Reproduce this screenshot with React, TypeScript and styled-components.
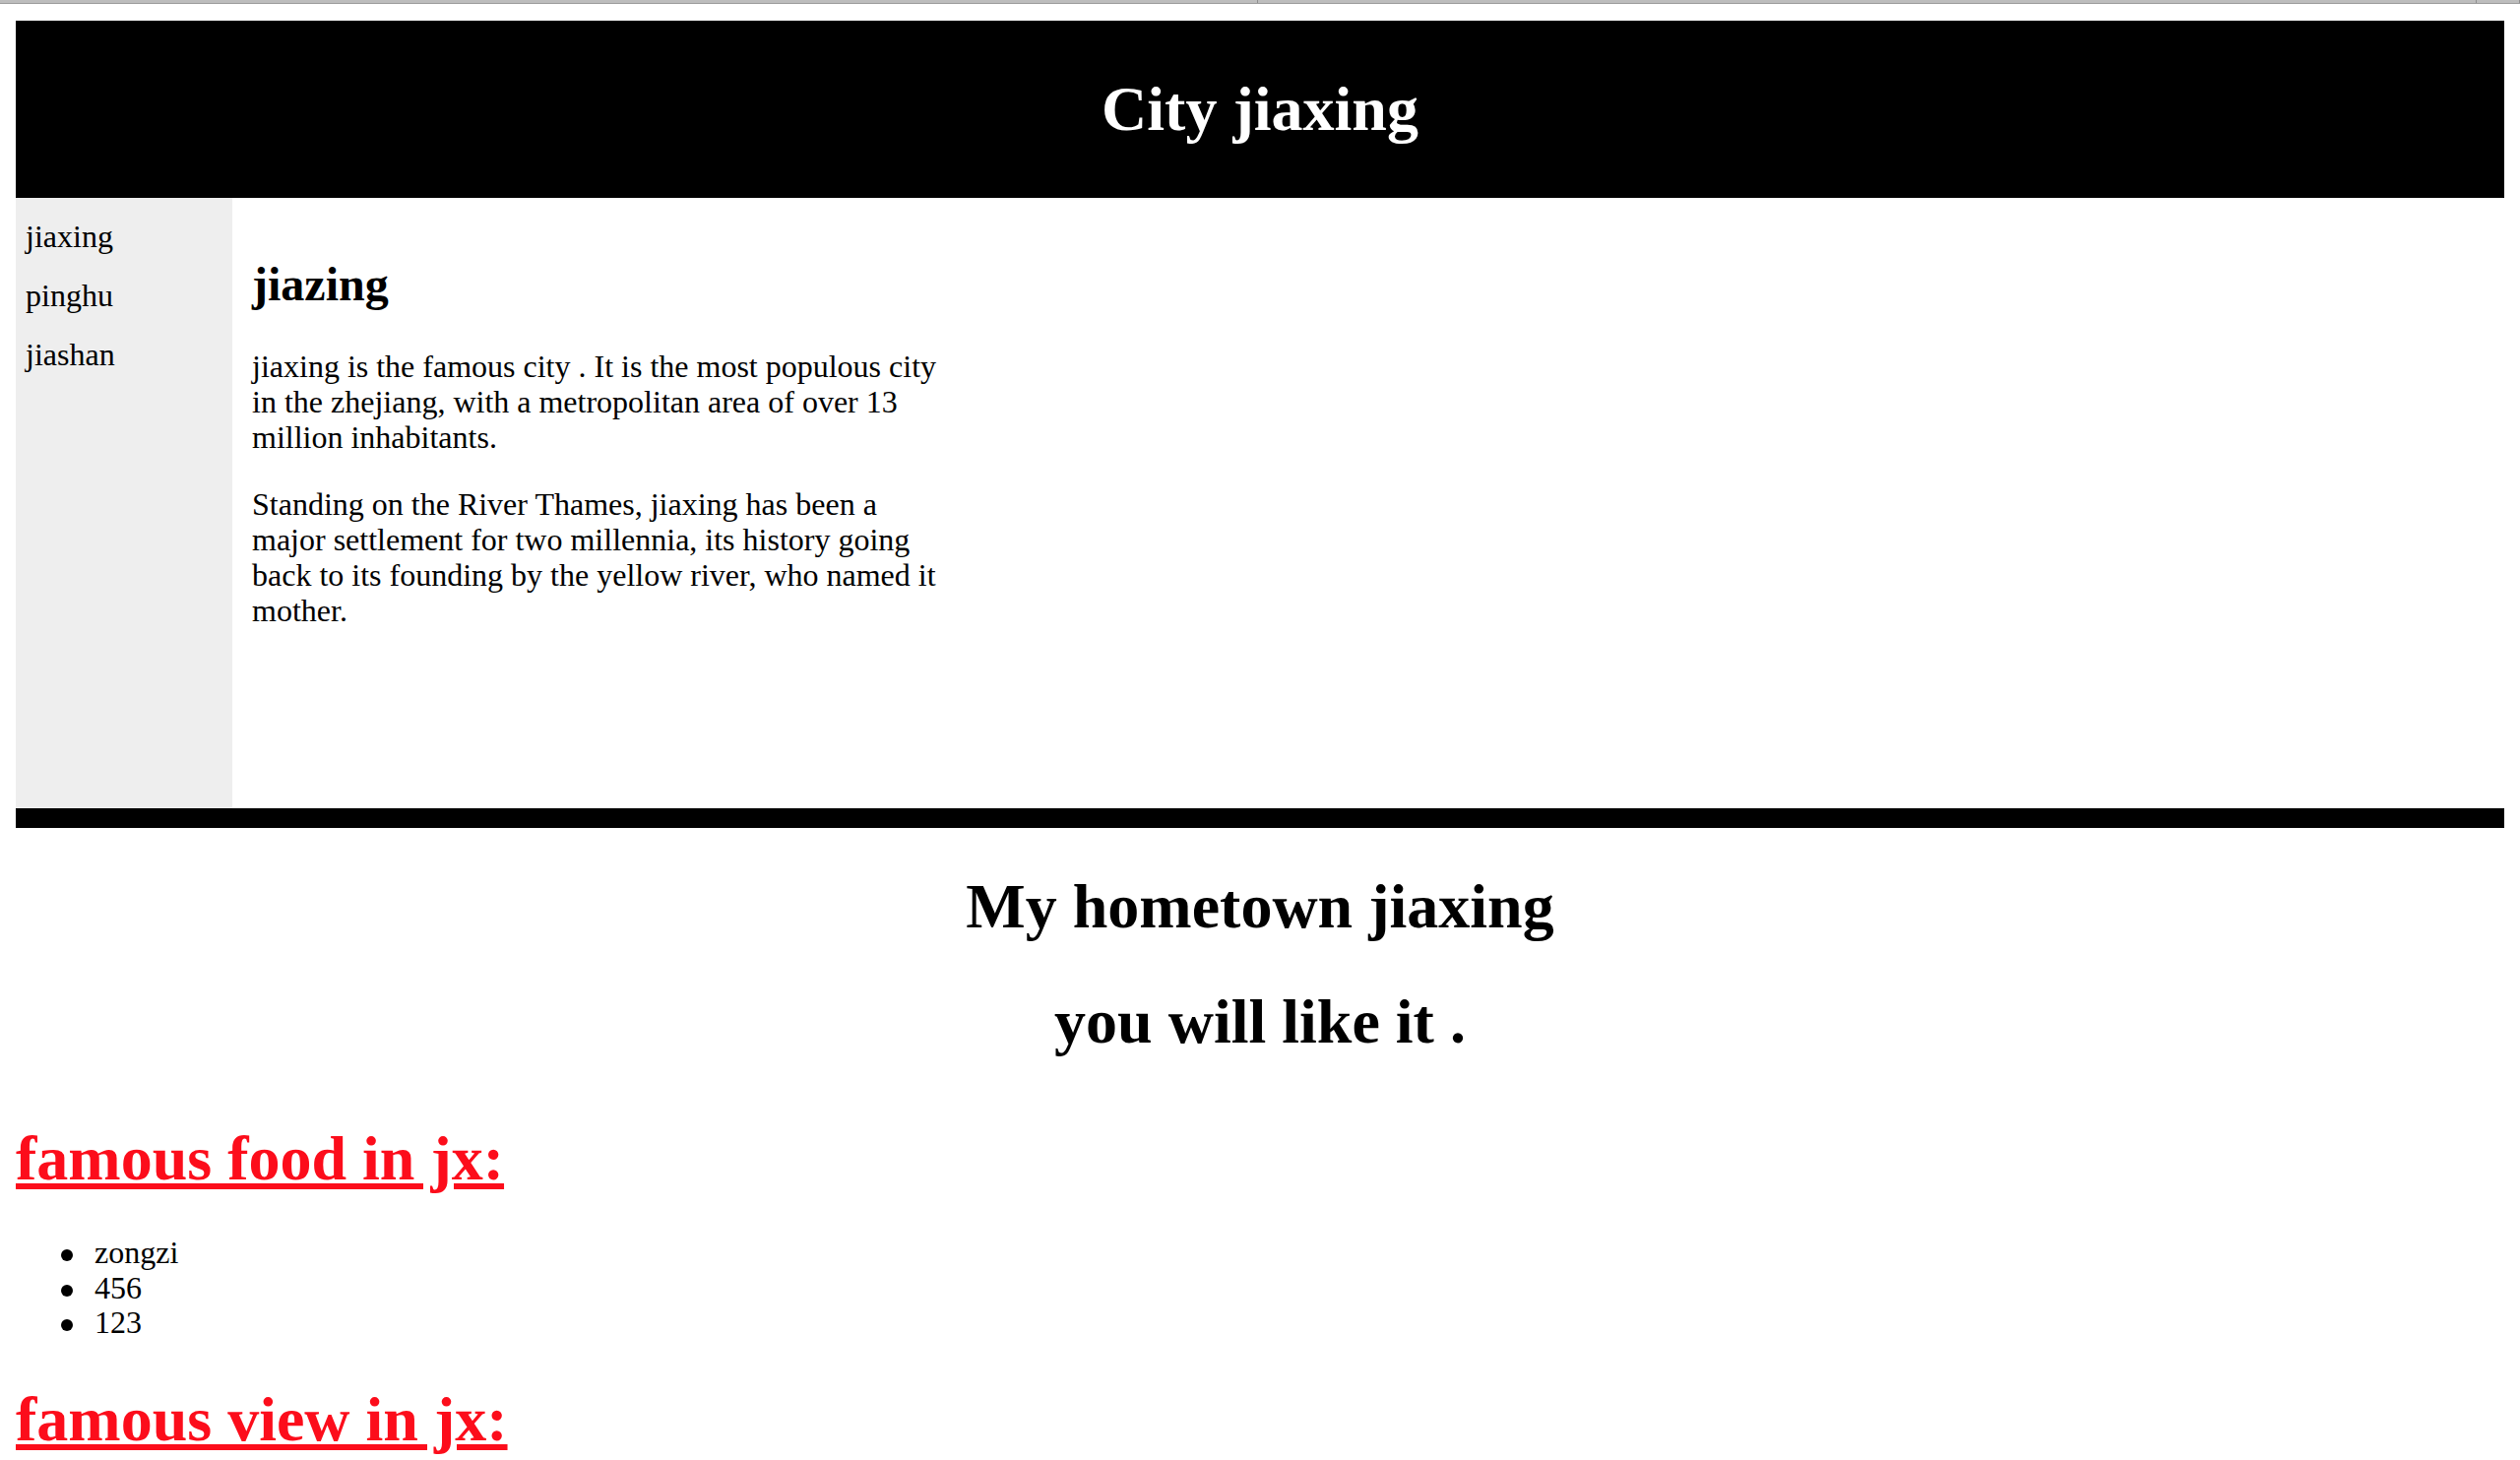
import React from "react";
import styled, { createGlobalStyle } from "styled-components";

const GlobalStyle = createGlobalStyle`
  html, body {
    margin: 0;
    padding: 0;
    background: #ffffff;
    overflow: hidden;
  }
  body {
    font-family: "Liberation Serif", "Times New Roman", Times, serif;
    font-size: 32px;
    color: #000000;
  }
`;

const BrowserStrip = styled.div`
  display: flex;
  height: 3px;
  background: #b6b6b6;
  border-bottom: 1px solid #9c9c9c;
`;

const StripTab = styled.div<{ $w?: number }>`
  flex: ${(p) => (p.$w ? `0 0 ${p.$w}px` : "1 1 auto")};
  border-right: 1px solid #8e8e8e;
  background: #bdbdbd;
`;

const Page = styled.div`
  padding: 17px 16px 0;
`;

const Header = styled.header`
  background: #000000;
  color: #ffffff;
  text-align: center;
  padding: 10px;
`;

const HeaderTitle = styled.h1`
  margin: 43px 0;
  font-size: 64px;
  font-weight: bold;
  line-height: normal;
`;

const Section = styled.section`
  display: flex;
  height: 620px;
`;

const Nav = styled.nav`
  box-sizing: border-box;
  flex: 0 0 220px;
  height: 100%;
  background: #eeeeee;
  padding: 21px 10px;
`;

const NavList = styled.ul`
  list-style: none;
  margin: 0;
  padding: 0;
`;

const NavItem = styled.li`
  line-height: 36px;
  margin-bottom: 24px;
`;

const Article = styled.article`
  width: 700px;
  padding: 20px;
`;

const ArticleTitle = styled.h2`
  margin: 40px 0 38px;
  font-size: 48px;
  font-weight: bold;
  line-height: normal;
`;

const Paragraph = styled.p`
  margin: 32px 0;
  line-height: 36px;
`;

const Footer = styled.footer`
  background: #000000;
  height: 20px;
`;

const CenterTitle = styled.h1`
  margin: 43px 0;
  font-size: 64px;
  font-weight: bold;
  text-align: center;
  line-height: normal;
`;

const LinkTitle = styled.h1<{ $top: number }>`
  margin: ${(p) => p.$top}px 0 41px;
  font-size: 64px;
  font-weight: bold;
  line-height: normal;
  color: #fc0d1b;
  text-decoration: underline;
`;

const FoodList = styled.ul`
  margin: 32px 0;
  padding-left: 80px;
  list-style: none;
`;

const FoodItem = styled.li`
  position: relative;
  line-height: 35.5px;

  &::before {
    content: "";
    position: absolute;
    left: -34px;
    top: 14px;
    width: 12px;
    height: 12px;
    border-radius: 50%;
    background: #000000;
  }
`;

const navItems = ["jiaxing", "pinghu", "jiashan"];
const foods = ["zongzi", "456", "123"];

export default function App() {
  return (
    <>
      <GlobalStyle />
      <BrowserStrip>
        <StripTab $w={1277} />
        <StripTab $w={1237} />
        <StripTab />
      </BrowserStrip>
      <Page>
        <Header>
          <HeaderTitle>City jiaxing</HeaderTitle>
        </Header>
        <Section>
          <Nav>
            <NavList>
              {navItems.map((n) => (
                <NavItem key={n}>{n}</NavItem>
              ))}
            </NavList>
          </Nav>
          <Article>
            <ArticleTitle>jiazing</ArticleTitle>
            <Paragraph>
              jiaxing is the famous city . It is the most populous city in the
              zhejiang, with a metropolitan area of over 13 million inhabitants.
            </Paragraph>
            <Paragraph>
              Standing on the River Thames, jiaxing has been a major settlement
              for two millennia, its history going back to its founding by the
              yellow river, who named it mother.
            </Paragraph>
          </Article>
        </Section>
        <Footer />
        <CenterTitle>My hometown jiaxing</CenterTitle>
        <CenterTitle>you will like it .</CenterTitle>
        <LinkTitle $top={65}>famous food in jx:</LinkTitle>
        <FoodList>
          {foods.map((f) => (
            <FoodItem key={f}>{f}</FoodItem>
          ))}
        </FoodList>
        <LinkTitle $top={43}>famous view in jx:</LinkTitle>
      </Page>
    </>
  );
}
